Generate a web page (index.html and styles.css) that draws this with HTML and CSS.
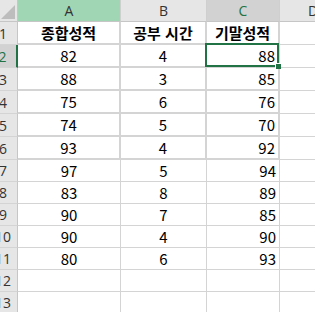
FILE: index.html
```html
<!DOCTYPE html>
<html lang="ko">
<head>
<meta charset="utf-8">
<link rel="stylesheet" href="styles.css">
</head>
<body>
<div class="sheet">
  <div class="corner"><svg class="tri" width="14" height="14" viewBox="0 0 14 14"><polygon points="14,0 14,14 0,14" fill="#bdbdbd"/></svg></div>
  <div class="ch col-a">A</div>
  <div class="ch">B</div>
  <div class="ch col-active">C</div>
  <div class="ch">D</div>

  <div class="rh tall">1</div>
  <div class="c t ctr kr">종합성적</div>
  <div class="c t ctr kr">공부 시간</div>
  <div class="c t ctr kr">기말성적</div>
  <div class="c"></div>

  <div class="rh tall row-active">2</div>
  <div class="c t ctr">82</div>
  <div class="c t ctr">4</div>
  <div class="c t rgt active">88</div>
  <div class="c"></div>

  <div class="rh tall">3</div>
  <div class="c t ctr">88</div>
  <div class="c t ctr">3</div>
  <div class="c t rgt">85</div>
  <div class="c"></div>

  <div class="rh tall">4</div>
  <div class="c t ctr">75</div>
  <div class="c t ctr">6</div>
  <div class="c t rgt">76</div>
  <div class="c"></div>

  <div class="rh tall">5</div>
  <div class="c t ctr">74</div>
  <div class="c t ctr">5</div>
  <div class="c t rgt">70</div>
  <div class="c"></div>

  <div class="rh tall">6</div>
  <div class="c t ctr">93</div>
  <div class="c t ctr">4</div>
  <div class="c t rgt">92</div>
  <div class="c"></div>

  <div class="rh">7</div>
  <div class="c ctr">97</div>
  <div class="c ctr">5</div>
  <div class="c rgt">94</div>
  <div class="c"></div>

  <div class="rh">8</div>
  <div class="c ctr">83</div>
  <div class="c ctr">8</div>
  <div class="c rgt">89</div>
  <div class="c"></div>

  <div class="rh">9</div>
  <div class="c ctr">90</div>
  <div class="c ctr">7</div>
  <div class="c rgt">85</div>
  <div class="c"></div>

  <div class="rh">10</div>
  <div class="c ctr">90</div>
  <div class="c ctr">4</div>
  <div class="c rgt">90</div>
  <div class="c"></div>

  <div class="rh">11</div>
  <div class="c ctr">80</div>
  <div class="c ctr">6</div>
  <div class="c rgt">93</div>
  <div class="c"></div>

  <div class="rh">12</div>
  <div class="c"></div>
  <div class="c"></div>
  <div class="c"></div>
  <div class="c"></div>

  <div class="rh">13</div>
  <div class="c"></div>
  <div class="c"></div>
  <div class="c"></div>
  <div class="c"></div>
</div>
</body>
</html>
```
FILE: styles.css
```css
html, body {
  margin: 0;
  padding: 0;
  background: #ffffff;
  overflow: hidden;
  width: 315px;
  height: 312px;
}

.sheet {
  display: grid;
  grid-template-columns: 29px 103px 86px 73px 67px;
  grid-template-rows: 22px repeat(6, 23px) repeat(7, 22px);
  margin-left: -11px;
  width: 358px;
  font-family: "Noto Sans CJK KR", "Noto Sans", sans-serif;
  color: #000000;
}

.corner,
.ch,
.rh,
.c {
  box-sizing: border-box;
  display: flex;
  align-items: center;
}

.corner {
  background: #e6e6e6;
  border-right: 1px solid #c6c6c6;
  border-bottom: 1px solid #c6c6c6;
  justify-content: flex-end;
  align-items: flex-end;
  padding: 0 2px 2px 0;
}

.tri {
  display: block;
}

.ch {
  background: #e6e6e6;
  border-right: 1px solid #cfcfcf;
  border-bottom: 1px solid #c6c6c6;
  justify-content: center;
  font-family: "Open Sans", "Noto Sans", sans-serif;
  font-size: 14px;
  color: #333333;
}

.col-a {
  background: #a0d6b4;
}

.col-active {
  background: #d2d2d2;
  color: #217346;
}

.rh {
  background: #e6e6e6;
  border-right: 1px solid #c6c6c6;
  border-bottom: 1px solid #d4d4d4;
  justify-content: center;
  font-family: "Open Sans", "Noto Sans", sans-serif;
  font-size: 14px;
  color: #333333;
}

.row-active {
  background: #d2d2d2;
  color: #217346;
  border-right: 2px solid #217346;
}

.c {
  border-right: 1px solid #d4d4d4;
  border-bottom: 1px solid #d4d4d4;
  font-size: 15px;
}

.c.t {
  border-right-width: 2px;
  border-bottom-width: 2px;
}

.ctr {
  justify-content: center;
}

.rgt {
  justify-content: flex-end;
  padding-right: 3px;
}

.kr {
  font-weight: 700;
}

.active {
  position: relative;
}

.active::before {
  content: "";
  position: absolute;
  top: -2px;
  left: -2px;
  right: -1px;
  bottom: -1px;
  border: 2px solid #217346;
}

.active::after {
  content: "";
  position: absolute;
  right: -3px;
  bottom: -3px;
  width: 5px;
  height: 5px;
  background: #217346;
  border-top: 1px solid #ffffff;
  border-left: 1px solid #ffffff;
}
```
